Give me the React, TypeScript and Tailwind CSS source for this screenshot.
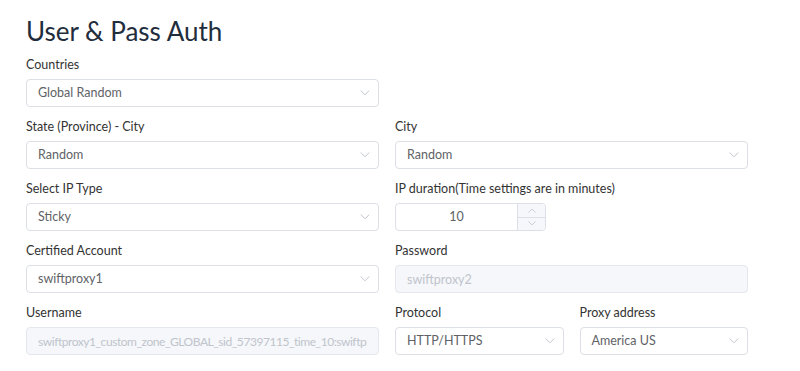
import React from "react";

const font = { fontFamily: 'Lato, "Segoe UI", "Noto Sans", sans-serif' };

function Chevron({ up = false, className = "" }: { up?: boolean; className?: string }) {
  return (
    <svg width="10" height="6" viewBox="0 0 10 6" className={className} fill="none">
      <path
        d={up ? "M1 5.2 L5 1.2 L9 5.2" : "M1 0.8 L5 4.8 L9 0.8"}
        stroke="#c0c4cc"
        strokeWidth="1"
        strokeLinecap="round"
        strokeLinejoin="round"
      />
    </svg>
  );
}

function Label({ children }: { children: React.ReactNode }) {
  return <div className="h-5 text-[12.5px] leading-5 text-[#333333]">{children}</div>;
}

function Select({ value }: { value: string }) {
  return (
    <div className="mt-1 flex h-[28px] items-center justify-between rounded-[4px] border border-[#dcdfe6] bg-white pl-[11px] pr-[8px]">
      <span className="text-[12.5px] text-[#606266]">{value}</span>
      <Chevron />
    </div>
  );
}

function DisabledInput({ value, tight = false }: { value: string; tight?: boolean }) {
  return (
    <input
      readOnly
      value={value}
      style={font}
      className={
        tight
          ? "mt-1 h-[28px] w-full min-w-0 rounded-[4px] border border-[#e4e7ed] bg-[#f5f7fa] pl-[11px] pr-[11px] text-[12px] tracking-[-0.45px] text-[#c0c4cc] outline-none"
          : "mt-1 h-[28px] w-full min-w-0 rounded-[4px] border border-[#e4e7ed] bg-[#f5f7fa] pl-[11px] pr-[11px] text-[12.5px] text-[#c0c4cc] outline-none"
      }
    />
  );
}

function Field({ label, children }: { label: string; children: React.ReactNode }) {
  return (
    <div className="flex min-w-0 flex-col">
      <Label>{label}</Label>
      {children}
    </div>
  );
}

export default function App() {
  return (
    <div className="h-[371px] w-[800px] overflow-hidden bg-white pl-[26px] pt-[13px]" style={font}>
      <h1 className="mb-[6px] h-9 text-[26px] font-normal leading-9 text-[#1f2d3d]">User &amp; Pass Auth</h1>
      <div className="grid w-[722px] grid-cols-2 gap-x-4 gap-y-[10px]">
        <Field label="Countries">
          <Select value="Global Random" />
        </Field>
        <div />
        <Field label="State (Province) - City">
          <Select value="Random" />
        </Field>
        <Field label="City">
          <Select value="Random" />
        </Field>
        <Field label="Select IP Type">
          <Select value="Sticky" />
        </Field>
        <Field label="IP duration(Time settings are in minutes)">
          <div className="mt-1 flex h-[28px] w-[151px] overflow-hidden rounded-[4px] border border-[#dcdfe6] bg-white">
            <div className="flex flex-1 items-center justify-center text-[12.5px] text-[#606266]">10</div>
            <div className="flex w-[28px] flex-col border-l border-[#dcdfe6] bg-[#f5f7fa]">
              <div className="flex flex-1 items-center justify-center border-b border-[#dcdfe6]">
                <Chevron up className="h-[5px] w-[8px]" />
              </div>
              <div className="flex flex-1 items-center justify-center">
                <Chevron className="h-[5px] w-[8px]" />
              </div>
            </div>
          </div>
        </Field>
        <Field label="Certified Account">
          <Select value="swiftproxy1" />
        </Field>
        <Field label="Password">
          <DisabledInput value="swiftproxy2" />
        </Field>
        <Field label="Username">
          <DisabledInput tight value="swiftproxy1_custom_zone_GLOBAL_sid_57397115_time_10:swiftproxy2" />
        </Field>
        <div className="grid grid-cols-2 gap-x-4">
          <Field label="Protocol">
            <Select value="HTTP/HTTPS" />
          </Field>
          <Field label="Proxy address">
            <Select value="America US" />
          </Field>
        </div>
      </div>
    </div>
  );
}
